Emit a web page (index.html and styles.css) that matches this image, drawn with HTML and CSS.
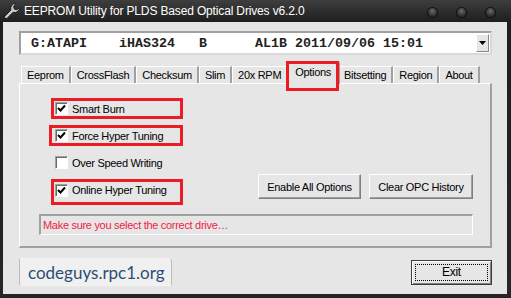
FILE: index.html
```html
<!DOCTYPE html>
<html lang="en">
<head>
  <meta charset="UTF-8">
  <title>EEPROM Utility for PLDS Based Optical Drives v6.2.0</title>
  <link rel="stylesheet" href="styles.css">
</head>
<body>
  <div class="window">
    <div class="titlebar">
      <svg class="app-icon" width="18" height="18" viewBox="0 0 18 18">
        <path d="M12.5 1.5a5 5 0 0 0-4.6 6.6L1.8 14.2a1.6 1.6 0 0 0 2.2 2.2l6.1-6.1a5 5 0 0 0 6.5-4.7l-2.7 2.1-2.6-.6-.6-2.6 2.2-2.8a5 5 0 0 0-.4-.2z" fill="#c9c9c9" stroke="#1a1a1a" stroke-width="1"/>
      </svg>
      <span class="title">EEPROM Utility for PLDS Based Optical Drives v6.2.0</span>
      <div class="caption-btns">
        <span class="dot"></span>
        <span class="dot"></span>
        <span class="dot"></span>
      </div>
    </div>

    <div class="client">
      <div class="combo">
        <span class="combo-text">G:ATAPI    iHAS324   B      AL1B 2011/09/06 15:01</span>
        <span class="combo-btn">
          <svg width="7" height="4" viewBox="0 0 7 4"><path d="M0 0h7L3.5 4z" fill="#000"/></svg>
        </span>
      </div>

      <div class="tabs">
        <span class="tab">Eeprom</span>
        <span class="tab">CrossFlash</span>
        <span class="tab">Checksum</span>
        <span class="tab">Slim</span>
        <span class="tab">20x RPM</span>
        <span class="tab tab-active marked">Options</span>
        <span class="tab">Bitsetting</span>
        <span class="tab">Region</span>
        <span class="tab">About</span>
      </div>

      <div class="panel">
        <div class="options">
          <div class="checks">
            <label class="check marked">
              <span class="box"><svg width="11" height="11" viewBox="0 0 11 11"><polyline points="2,5 4.5,7.5 9,2.5" fill="none" stroke="#000" stroke-width="2"/></svg></span>
              Smart Burn
            </label>
            <label class="check marked wide">
              <span class="box"><svg width="11" height="11" viewBox="0 0 11 11"><polyline points="2,5 4.5,7.5 9,2.5" fill="none" stroke="#000" stroke-width="2"/></svg></span>
              Force Hyper Tuning
            </label>
            <label class="check">
              <span class="box"></span>
              Over Speed Writing
            </label>
            <label class="check marked tall">
              <span class="box"><svg width="11" height="11" viewBox="0 0 11 11"><polyline points="2,5 4.5,7.5 9,2.5" fill="none" stroke="#000" stroke-width="2"/></svg></span>
              Online Hyper Tuning
            </label>
          </div>
          <div class="actions">
            <button class="btn">Enable All Options</button>
            <button class="btn">Clear OPC History</button>
          </div>
        </div>
        <div class="status">Make sure you select the correct drive…</div>
      </div>

      <div class="bottom">
        <div class="logo">codeguys.rpc1.org</div>
        <button class="btn exit"><span class="focus">Exit</span></button>
      </div>
    </div>
  </div>
</body>
</html>
```

FILE: styles.css
```css
body {
  margin: 0;
  padding: 0;
  background-color: #1c1c1c;
  font-family: "Liberation Sans", Arial, sans-serif;
  font-size: 11px;
  letter-spacing: -0.3px;
  color: #000;
}

.window {
  width: 511px;
  height: 298px;
  box-sizing: border-box;
  padding: 0 4px 4px 3px;
  background: linear-gradient(#3e3e3e, #1e1e1e 22px, #262626);
  display: flex;
  flex-direction: column;
}

/* title bar */
.titlebar {
  height: 22px;
  display: flex;
  align-items: center;
}

.app-icon {
  margin: 0 3px 0 0;
}

.title {
  color: #fff;
  font-size: 12px;
  letter-spacing: -0.15px;
  flex: 1;
}

.caption-btns {
  display: flex;
  gap: 20px;
  margin-right: 12px;
  margin-top: 2px;
}

.dot {
  width: 9px;
  height: 9px;
  border-radius: 50%;
  background: radial-gradient(circle at 50% 35%, #6a6a6a, #2a2a2a 70%);
  box-shadow: 0 0 0 1px #111;
}

/* client area */
.client {
  flex: 1;
  background-color: #e6e6e6;
  display: flex;
  flex-direction: column;
  padding: 9px 15px 8px 16px;
}

.combo {
  height: 24px;
  box-sizing: border-box;
  background: #fff;
  border: 2px solid #a0a0a0;
  border-right-color: #d9d9d9;
  border-bottom-color: #d9d9d9;
  display: flex;
  align-items: center;
  padding: 0 0 0 10px;
}

.combo-text {
  flex: 1;
  white-space: pre;
  font-family: "Liberation Mono", "Courier New", monospace;
  font-weight: bold;
  font-size: 13.33px;
  letter-spacing: 0;
  color: #222;
}

.combo-btn {
  width: 13px;
  height: 18px;
  margin-right: 1px;
  box-sizing: border-box;
  background: #e6e6e6;
  border: 1px solid #fff;
  border-right-color: #888;
  border-bottom-color: #888;
  display: flex;
  align-items: center;
  justify-content: center;
}

/* tabs */
.tabs {
  margin: 7px 0 0 2px;
  height: 21px;
  display: flex;
  align-items: flex-end;
  position: relative;
  z-index: 1;
}

.tab {
  height: 17px;
  box-sizing: border-box;
  padding: 0 5px 0 5px;
  display: flex;
  align-items: center;
  border-top: 1px solid #fff;
  border-left: 1px solid #fff;
  border-right: 2px solid #a0a0a0;
  background: #e6e6e6;
}

.tab-active {
  height: 22px;
  margin: 0 -2px -1px -2px;
  padding: 0 7px 3px 8px;
  position: relative;
}

.marked::after {
  content: "";
  position: absolute;
  top: -2px;
  left: -1px;
  right: -1px;
  bottom: -7px;
  border: 3px solid #ed1c24;
}

/* panel */
.panel {
  height: 165px;
  box-sizing: border-box;
  border-top: 1px solid #fff;
  border-left: 1px solid #fff;
  border-right: 2px solid #a0a0a0;
  border-bottom: 2px solid #a0a0a0;
  padding: 14px 17px 11px 19px;
  display: flex;
  flex-direction: column;
}

.options {
  display: flex;
  justify-content: space-between;
}

.checks {
  display: flex;
  flex-direction: column;
  gap: 6px;
  margin-left: 12px;
}

.check {
  position: relative;
  width: 132px;
  height: 21px;
  box-sizing: border-box;
  border: 3px solid transparent;
  padding-left: 1px;
  display: flex;
  align-items: center;
  gap: 4px;
}

.check.marked::after {
  display: none;
}

.check.marked {
  border-color: #ed1c24;
}

.check.wide {
  width: 134px;
  margin-left: -2px;
  padding-left: 3px;
}

.check.tall {
  height: 26px;
  padding-bottom: 4px;
}

.box {
  width: 13px;
  height: 13px;
  box-sizing: border-box;
  background: #fff;
  border: 1px solid #a0a0a0;
  border-right-color: #fff;
  border-bottom-color: #fff;
  box-shadow: inset 1px 1px 0 #696969;
  display: flex;
  align-items: center;
  justify-content: center;
}

.actions {
  align-self: flex-end;
  display: flex;
  gap: 8px;
  margin-bottom: 6px;
}

.btn {
  height: 25px;
  box-sizing: border-box;
  font-family: "Liberation Sans", Arial, sans-serif;
  font-size: 11px;
  letter-spacing: -0.3px;
  white-space: nowrap;
  color: #000;
  background-color: #e6e6e6;
  border: 1px solid #fff;
  border-right-color: #808080;
  border-bottom-color: #808080;
  box-shadow: inset -1px -1px 0 #a0a0a0;
  padding: 0;
}

.actions .btn:first-child {
  width: 103px;
}

.actions .btn:last-child {
  width: 104px;
}

.status {
  margin-top: 9px;
  height: 21px;
  box-sizing: border-box;
  border: 2px solid #a0a0a0;
  border-right: 1px solid #fff;
  border-bottom: 1px solid #fff;
  color: #f21b45;
  padding: 0 0 0 2px;
  display: flex;
  align-items: center;
}

/* bottom row */
.bottom {
  margin-top: 10px;
  display: flex;
  align-items: center;
  justify-content: space-between;
}

.logo {
  width: 153px;
  height: 28px;
  box-sizing: border-box;
  background: #f0f0f0;
  border-top-right-radius: 4px;
  border-bottom-left-radius: 4px;
  border-top: 1px solid #f4f4f4;
  border-right: 1px solid #bdbdbd;
  border-bottom: 1px solid #f4f4f4;
  border-left: 1px solid #bdbdbd;
  font-family: Lato, "Open Sans", sans-serif;
  font-size: 17px;
  letter-spacing: 0;
  color: #2d4d78;
  display: flex;
  align-items: center;
  padding-left: 8px;
}

.exit {
  width: 81px;
  border: 1px solid #3c3c3c;
  box-shadow: inset 1px 1px 0 #fff, inset -1px -1px 0 #808080;
  padding: 3px;
}

.focus {
  display: flex;
  align-items: center;
  justify-content: center;
  height: 100%;
  box-sizing: border-box;
  border: 1px dotted #000;
  font-size: 12px;
}
```
